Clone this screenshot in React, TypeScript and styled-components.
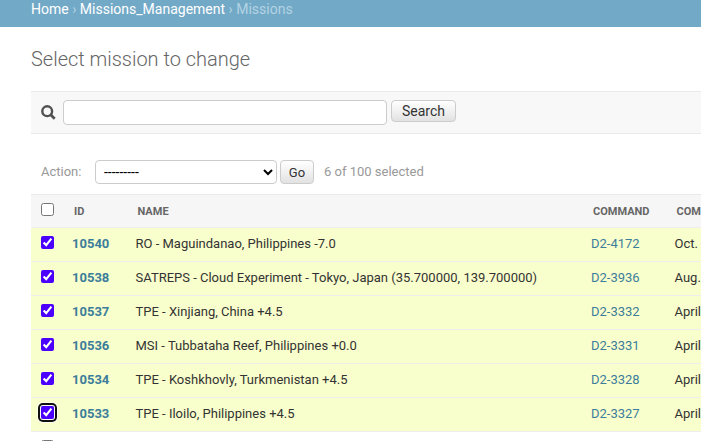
import React from "react";
import styled, { createGlobalStyle } from "styled-components";

const GlobalStyle = createGlobalStyle`
  * { box-sizing: border-box; }
  html, body { margin: 0; height: 441px; overflow: hidden; background: #fff; }
  body { font: 13px/16px Roboto, sans-serif; color: #333; }
  a { text-decoration: none; }
`;

const Page = styled.div`
  width: 701px;
  height: 441px;
  overflow: hidden;
`;

const Breadcrumbs = styled.nav`
  height: 27px;
  padding-left: 31px;
  background: #72a9c7;
  color: #b3d3e3;
  font-size: 14px;
  line-height: 18px;
  white-space: pre;
  a { color: #fff; }
`;

const Content = styled.main`
  margin-left: 31px;
`;

const Title = styled.h1`
  margin: 0;
  height: 64px;
  padding-top: 20px;
  font-size: 20px;
  line-height: 24px;
  font-weight: 300;
  letter-spacing: -0.02px;
  color: #666;
`;

const Toolbar = styled.form`
  display: flex;
  align-items: flex-start;
  height: 43px;
  padding: 8px 10px 0;
  background: #f8f8f8;
  border-top: 1px solid #eaeaea;
  border-bottom: 1px solid #eaeaea;
`;

const SearchIcon = styled.svg`
  width: 15px;
  height: 15px;
  margin: 5px 7px 0 0;
  flex: none;
`;

const SearchInput = styled.input`
  width: 324px;
  height: 25px;
  margin: 0 4px 0 0;
  padding: 2px 6px;
  border: 1px solid #ccc;
  border-radius: 4px;
  background: #fff;
`;

const Button = styled.button<{ $wide?: boolean }>`
  width: ${(p) => (p.$wide ? 65 : 34)}px;
  height: ${(p) => (p.$wide ? 22 : 24)}px;
  padding: ${(p) => (p.$wide ? 0 : 1)}px 0 0;
  border: 1px solid #ccc;
  border-radius: 4px;
  background: linear-gradient(#fff, #e2e2e2);
  color: #333;
  font: ${(p) => (p.$wide ? 14 : 13)}px Roboto, sans-serif;
`;

const Actions = styled.div`
  display: flex;
  align-items: flex-start;
  height: 60px;
  padding: 26px 10px 0;
  color: #999;
  line-height: 24px;
`;

const ActionLabel = styled.label`
  width: 54px;
`;

const ActionSelect = styled.select`
  width: 182px;
  height: 24px;
  margin: 0 3px 0 0;
  padding: 0 4px;
  border: 1px solid #ccc;
  border-radius: 4px;
  background: #fff;
  color: #000;
  font: 14px Roboto, sans-serif;
`;

const Counter = styled.span`
  margin-left: 10px;
`;

const Table = styled.div`
  width: 670px;
`;

const Row = styled.div<{ $selected?: boolean }>`
  display: grid;
  grid-template-columns: 41px 63.5px 455.5px 83.5px 1fr;
  height: 34px;
  padding-top: 8px;
  border-bottom: 1px solid #eee;
  background: ${(p) => (p.$selected ? "#f9ffcc" : "#fff")};
  white-space: nowrap;
`;

const HeadRow = styled(Row)`
  border-top: 1px solid #eaeaea;
  background: #f6f6f6;
  color: #666;
  font-size: 11px;
  font-weight: 700;
  text-transform: uppercase;
`;

const HeadCell = styled.div`
  padding: 1px 0 0 2px;
`;

const CheckFrame = styled.span<{ $focused?: boolean }>`
  display: block;
  width: 13px;
  height: 13px;
  margin-left: 10px;
  border-radius: 2px;
  box-shadow: ${(p) =>
    p.$focused ? "0 0 0 1px #fff, 0 0 0 3px #101010, 0 0 0 4px rgba(255, 255, 255, 0.6)" : "none"};
`;

const Check = styled.input`
  display: block;
  width: 13px;
  height: 13px;
  margin: 0;
  accent-color: #4b00ff;
`;

const IdLink = styled.a`
  color: #3c7d9b;
  font-weight: 700;
`;

const CommandLink = styled.a`
  color: #3c7d9b;
`;

const missions = [
  ["10540", "RO - Maguindanao, Philippines -7.0", "D2-4172", "Oct."],
  ["10538", "SATREPS - Cloud Experiment - Tokyo, Japan (35.700000, 139.700000)", "D2-3936", "Aug."],
  ["10537", "TPE - Xinjiang, China +4.5", "D2-3332", "April"],
  ["10536", "MSI - Tubbataha Reef, Philippines +0.0", "D2-3331", "April"],
  ["10534", "TPE - Koshkhovly, Turkmenistan +4.5", "D2-3328", "April"],
  ["10533", "TPE - Iloilo, Philippines +4.5", "D2-3327", "April"],
];

export default function App() {
  return (
    <Page>
      <GlobalStyle />
      <Breadcrumbs>
        <a href="#">Home</a> › <a href="#">Missions_Management</a> › Missions
      </Breadcrumbs>
      <Content>
        <Title>Select mission to change</Title>
        <Toolbar>
          <SearchIcon viewBox="0 0 15 15" fill="none" stroke="#505050">
            <circle cx="6.2" cy="6.2" r="4.9" strokeWidth="2.4" />
            <path d="M9.7 9.7 13.7 13.7" strokeWidth="2.7" />
          </SearchIcon>
          <SearchInput type="text" />
          <Button $wide type="button">Search</Button>
        </Toolbar>
        <Actions>
          <ActionLabel>Action:</ActionLabel>
          <ActionSelect><option>---------</option></ActionSelect>
          <Button type="button">Go</Button>
          <Counter>6 of 100 selected</Counter>
        </Actions>
        <Table>
          <HeadRow>
            <CheckFrame><Check type="checkbox" /></CheckFrame>
            <HeadCell>ID</HeadCell>
            <HeadCell>Name</HeadCell>
            <HeadCell>Command</HeadCell>
            <HeadCell>Com</HeadCell>
          </HeadRow>
          {missions.map(([id, name, command, time], i) => (
            <Row key={id} $selected>
              <CheckFrame $focused={i === missions.length - 1}>
                <Check type="checkbox" defaultChecked />
              </CheckFrame>
              <IdLink href="#">{id}</IdLink>
              <span>{name}</span>
              <CommandLink href="#">{command}</CommandLink>
              <span>{time}</span>
            </Row>
          ))}
          <Row>
            <CheckFrame><Check type="checkbox" /></CheckFrame>
          </Row>
        </Table>
      </Content>
    </Page>
  );
}
